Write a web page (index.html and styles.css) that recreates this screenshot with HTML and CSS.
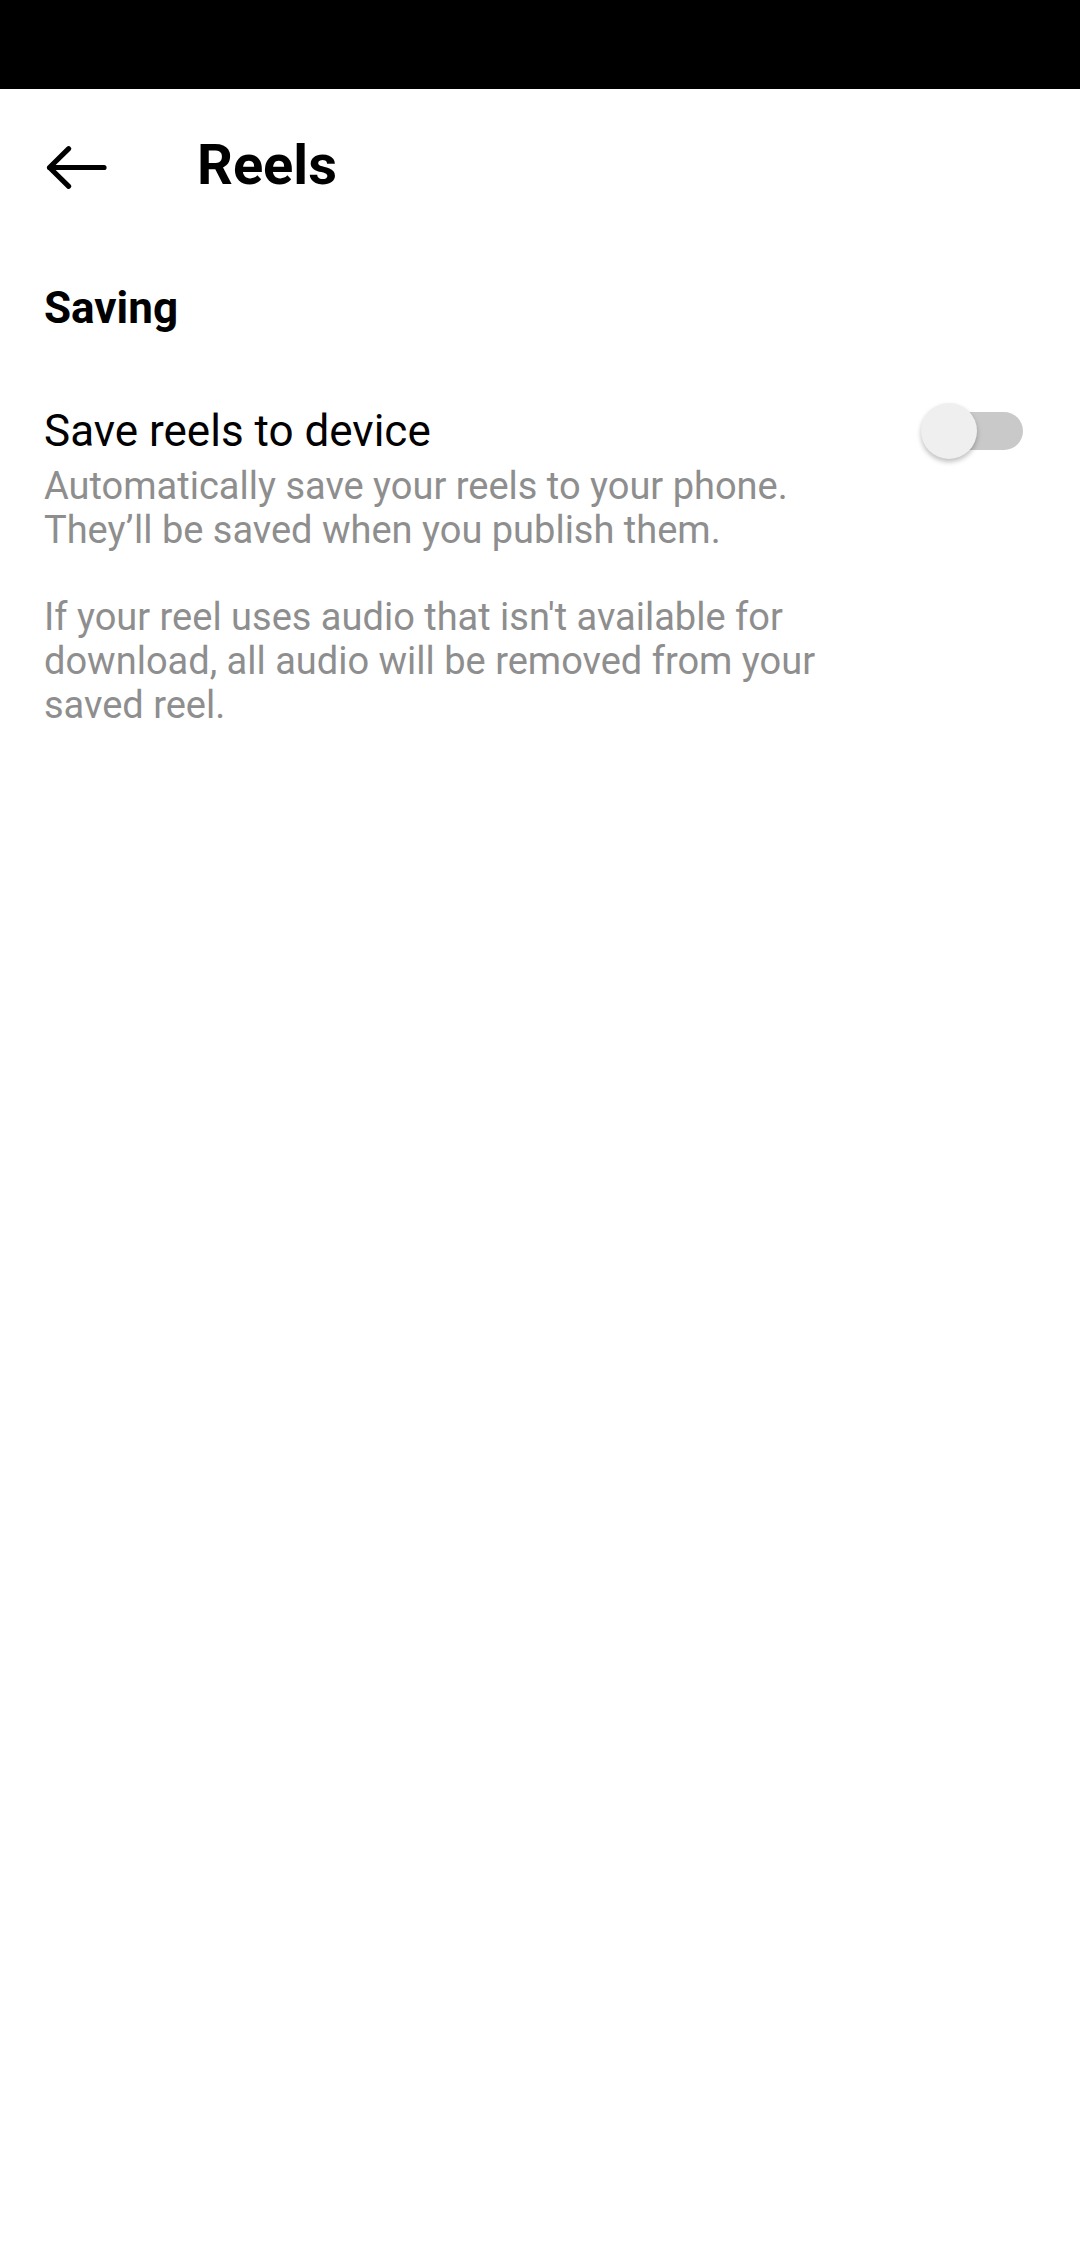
FILE: index.html
```html
<!DOCTYPE html>
<html>
<head>
<meta charset="utf-8">
<link rel="stylesheet" href="styles.css">
</head>
<body>
<div class="status-bar"></div>
<header class="top-bar">
  <div class="back">
    <svg width="64" height="48" viewBox="0 0 64 48">
      <path d="M59 23.5 H4.5 M23.7 4.7 L4.5 23.5 L23.7 42.3" fill="none" stroke="#000" stroke-width="5.2" stroke-linecap="round" stroke-linejoin="round"/>
    </svg>
  </div>
  <h1 class="title">Reels</h1>
</header>
<main class="content">
  <h2 class="section-title">Saving</h2>
  <div class="setting-row">
    <div class="setting-text">
      <div class="setting-label">Save reels to device</div>
      <p class="setting-desc">Automatically save your reels to your phone. They’ll be saved when you publish them.</p>
      <p class="setting-desc second">If your reel uses audio that isn't available for download, all audio will be removed from your saved reel.</p>
    </div>
    <div class="toggle">
      <div class="track"></div>
      <div class="thumb"></div>
    </div>
  </div>
</main>
</body>
</html>
```
FILE: styles.css
```css
html, body {
  margin: 0;
  padding: 0;
  background: #fff;
  font-family: Roboto, "Noto Sans", sans-serif;
  color: #000;
}
.status-bar {
  height: 89px;
  background: #000;
}
.top-bar {
  height: 158px;
  display: flex;
  align-items: center;
  padding-left: 45px;
}
.back {
  width: 64px;
  height: 48px;
  display: flex;
}
.title {
  margin: 0 0 7px 88px;
  font-size: 56px;
  line-height: 68px;
  font-weight: 700;
}
.content {
  padding: 35px 0 0 44px;
}
.section-title {
  margin: 0;
  font-size: 44px;
  line-height: 52px;
  font-weight: 700;
}
.setting-row {
  margin-top: 73px;
  display: flex;
  justify-content: space-between;
}
.setting-text {
  width: 830px;
}
.setting-label {
  font-size: 44px;
  line-height: 48px;
}
.setting-desc {
  margin: 9px 0 0 0;
  font-size: 38px;
  line-height: 44.3px;
  color: #8e8e8e;
}
.setting-desc.second {
  margin-top: 42px;
}
.toggle {
  position: relative;
  width: 102px;
  height: 56px;
  margin-top: -4px;
  margin-right: 57px;
}
.track {
  position: absolute;
  left: 12px;
  right: 0;
  top: 9px;
  height: 38px;
  border-radius: 19px;
  background: #c9c9c9;
}
.thumb {
  position: absolute;
  left: 0;
  top: 0;
  width: 56px;
  height: 56px;
  border-radius: 50%;
  background: #efefef;
  box-shadow: 0 3px 5px rgba(0,0,0,0.25);
}
```
